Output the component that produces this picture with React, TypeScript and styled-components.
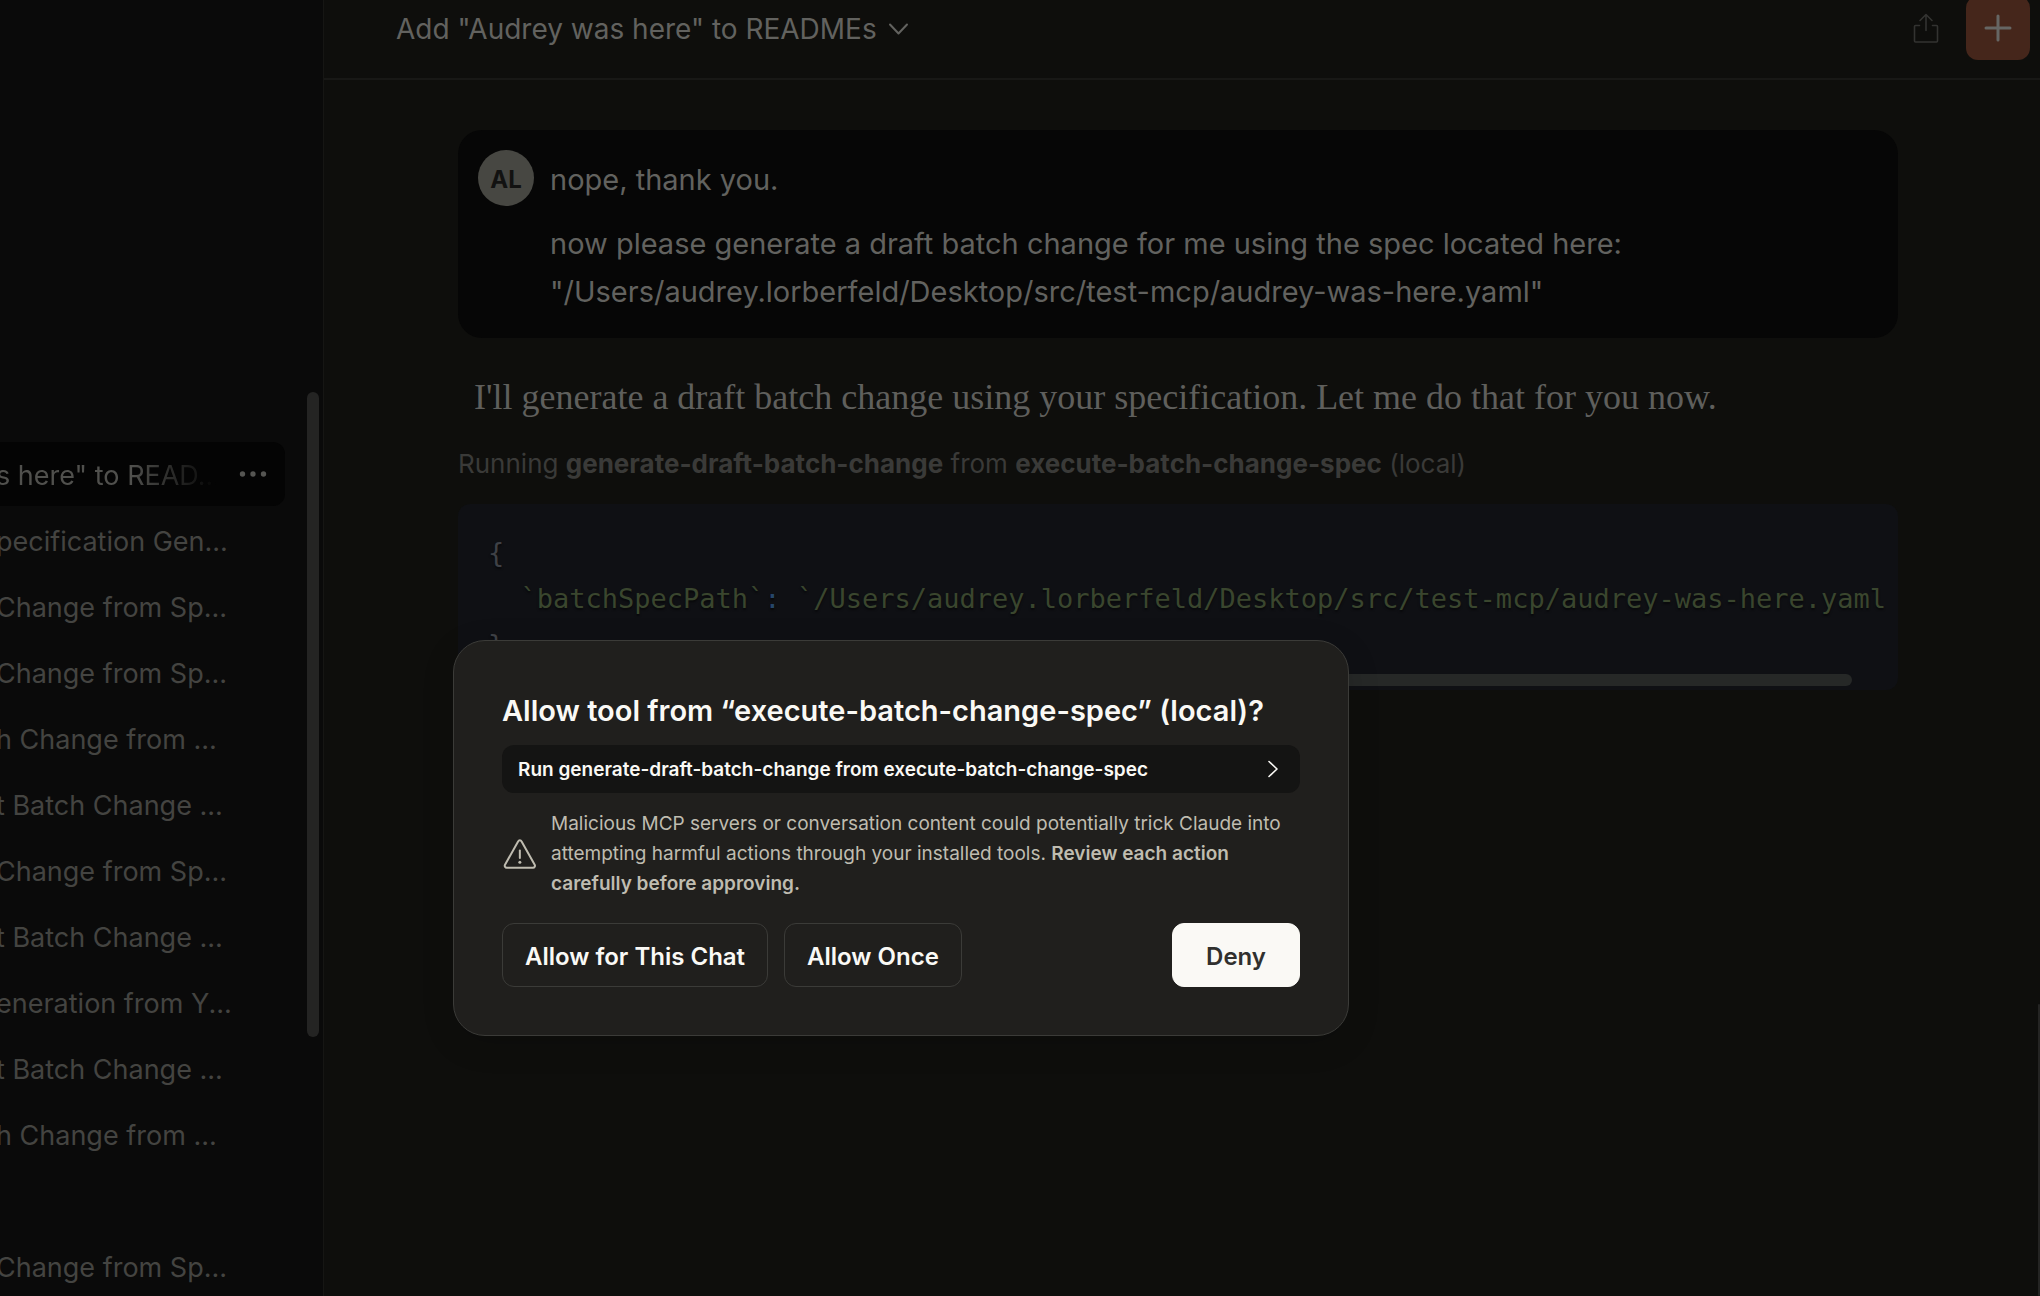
import React from "react";
import styled, { createGlobalStyle, css } from "styled-components";

const sans = `Inter, "Liberation Sans", sans-serif`;
const serif = `"Liberation Serif", serif`;
const mono = `"DejaVu Sans Mono", "Liberation Mono", monospace`;

const GlobalStyle = createGlobalStyle`
  *, *::before, *::after { box-sizing: border-box; }
  html, body, #root { height: 100%; }
  body {
    margin: 0;
    overflow: hidden;
    background: #0e0e0c;
    font-family: ${sans};
  }
  p, h1, h2, ul, pre { margin: 0; padding: 0; }
  button { font-family: inherit; cursor: pointer; }
`;

const Shell = styled.div`
  position: relative;
  display: grid;
  grid-template-columns: 324px minmax(0, 1fr);
  height: 100vh;
  overflow: hidden;
`;

/* Sidebar */

const Sidebar = styled.nav`
  display: flex;
  justify-content: space-between;
  min-height: 0;
  overflow: hidden;
  padding-right: 4px;
  background: #0a0a0a;
  border-right: 1px solid #161614;
`;

const ChatList = styled.ul`
  display: flex;
  flex-direction: column;
  gap: 2px;
  width: 285px;
  padding-top: 442px;
  list-style: none;
`;

const ChatItem = styled.li<{ $active?: boolean; $groupStart?: boolean }>`
  display: flex;
  flex: none;
  align-items: center;
  justify-content: space-between;
  height: 64px;
  padding-right: 16px;
  border-radius: 0 12px 12px 0;
  background: ${(p) => (p.$active ? "#040404" : "transparent")};
  ${(p) => p.$groupStart && css`margin-top: 66px;`}
`;

const ChatLink = styled.a<{ $active?: boolean }>`
  display: block;
  margin-left: -4px;
  padding-top: 4px;
  overflow: hidden;
  white-space: nowrap;
  font-size: 27px;
  line-height: 40px;
  text-decoration: none;
  color: ${(p) => (p.$active ? "#50504d" : "#444441")};
  ${(p) =>
    p.$active &&
    css`
      mask-image: linear-gradient(to right, #000 60%, transparent 98%);
    `}
`;

const MoreButton = styled.button`
  display: flex;
  padding: 0;
  border: 0;
  background: none;
  color: #555552;
`;

const ScrollRail = styled.div`
  display: flex;
  flex-direction: column;
  width: 12px;
`;

const RailSpace = styled.div<{ $grow: number }>`
  flex: ${(p) => p.$grow} 0 0;
`;

const RailThumb = styled(RailSpace)`
  border-radius: 6px;
  background: #242423;
`;

/* Main column */

const Main = styled.main`
  display: flex;
  flex-direction: column;
  min-width: 0;
  background: #0e0e0c;
`;

const Header = styled.header`
  display: flex;
  flex: none;
  align-items: center;
  justify-content: space-between;
  height: 80px;
  padding: 0 10px 22px 72px;
  border-bottom: 2px solid #181816;
`;

const TitleButton = styled.button`
  display: flex;
  align-items: center;
  gap: 8px;
  padding: 2px 0 0;
  border: 0;
  background: none;
  color: #62625f;
  font-size: 28px;
  line-height: 40px;
`;

const Actions = styled.div`
  display: flex;
  align-items: center;
  gap: 22px;
`;

const IconButton = styled.button`
  display: flex;
  padding: 0;
  border: 0;
  background: none;
  color: #333331;
`;

const NewButton = styled.button`
  display: flex;
  align-items: center;
  justify-content: center;
  width: 64px;
  height: 64px;
  padding: 0;
  border: 0;
  border-radius: 12px;
  background: #45261b;
  color: #666664;
`;

const Scroller = styled.div`
  display: flex;
  flex: 1;
  gap: 6px;
  min-height: 0;
`;

const Thread = styled.div`
  flex: 1;
  min-width: 0;
  max-width: 1440px;
  margin: 0 auto;
  padding-top: 50px;
`;

const PageRail = styled(ScrollRail)`
  width: 2px;
`;

const UserMessage = styled.section`
  display: flex;
  gap: 16px;
  padding: 20px 20px 22px;
  border-radius: 24px;
  background: #060606;
`;

const Avatar = styled.div`
  display: flex;
  flex: none;
  align-items: center;
  justify-content: center;
  width: 56px;
  height: 56px;
  padding-top: 2px;
  border-radius: 50%;
  background: #474742;
  color: #121211;
  font-size: 24px;
  font-weight: 700;
`;

const UserText = styled.div`
  display: flex;
  flex-direction: column;
  gap: 16px;
  padding-top: 6px;
  color: #62625f;
  font-size: 29px;
  line-height: 48px;
`;

const Reply = styled.p`
  padding: 34px 16px 0;
  color: #5f5f5c;
  font-family: ${serif};
  font-size: 36px;
  line-height: 50px;
`;

const Status = styled.p`
  margin-top: 22px;
  color: #3a3a38;
  font-size: 26px;
  line-height: 40px;
  b { font-weight: 700; }
`;

const CodeBlock = styled.section`
  display: flex;
  flex-direction: column;
  margin-top: 20px;
  padding: 26px 0 4px;
  border-radius: 12px;
  background: #0f1014;
  overflow: hidden;
`;

const Code = styled.pre`
  padding: 0 0 0 30px;
  overflow: hidden;
  color: #3f4146;
  font-family: ${mono};
  font-size: 27px;
  line-height: 46px;
  text-shadow: 0 2px 2px rgba(0, 0, 0, 0.5);
`;

const Str = styled.span`
  color: #3a462e;
`;

const Op = styled.span`
  color: #26466a;
`;

const CodeRail = styled.div`
  height: 12px;
  margin: 6px 46px 0 12px;
  border-radius: 6px;
  background: #262827;
`;

/* Permission dialog */

const Dialog = styled.div`
  position: absolute;
  top: 640px;
  left: 453px;
  display: flex;
  flex-direction: column;
  width: 896px;
  padding: 48px;
  border: 1px solid #3b3b38;
  border-radius: 32px;
  background: #201f1d;
  color: #faf9f5;
  box-shadow: 0 8px 32px rgba(0, 0, 0, 0.15);
`;

const DialogTitle = styled.h2`
  font-size: 29px;
  font-weight: 600;
  line-height: 44px;
`;

const RunRow = styled.button`
  display: flex;
  align-items: center;
  justify-content: space-between;
  height: 48px;
  margin-top: 12px;
  padding: 0 20px 0 16px;
  border: 0;
  border-radius: 12px;
  background: #141413;
  color: #faf9f5;
  font-size: 19px;
  font-weight: 600;
`;

const Warning = styled.div`
  display: flex;
  align-items: center;
  gap: 14px;
  margin-top: 16px;
  color: #bfbcb0;
  font-size: 19px;
  line-height: 30px;
  svg { flex: none; }
  b { font-weight: 600; }
`;

const Choices = styled.div`
  display: flex;
  gap: 16px;
  margin-top: 24px;
`;

const Choice = styled.button<{ $primary?: boolean }>`
  height: 64px;
  padding: 2px 22px 0;
  border: 1px solid #3b3b38;
  border-radius: 12px;
  background: transparent;
  color: #faf9f5;
  font-size: 24px;
  font-weight: 600;
  ${(p) =>
    p.$primary &&
    css`
      margin-left: auto;
      padding: 2px 33px 0;
      border-color: #faf9f5;
      background: #faf9f5;
      color: #30302e;
    `}
`;

const chats = [
  { title: `s here" to READ...`, active: true },
  { title: "pecification Gen..." },
  { title: "Change from Sp..." },
  { title: "Change from Sp..." },
  { title: "h Change from ..." },
  { title: "t Batch Change ..." },
  { title: "Change from Sp..." },
  { title: "t Batch Change ..." },
  { title: "eneration from Y..." },
  { title: "t Batch Change ..." },
  { title: "h Change from ..." },
  { title: "Change from Sp...", groupStart: true },
];

export default function App() {
  return (
    <>
      <GlobalStyle />
      <Shell>
        <Sidebar aria-label="Chats">
          <ChatList>
            {chats.map((chat, i) => (
              <ChatItem key={i} $active={chat.active} $groupStart={chat.groupStart}>
                <ChatLink href="#" $active={chat.active}>
                  {chat.title}
                </ChatLink>
                {chat.active && (
                  <MoreButton aria-label="Chat options">
                    <svg width="32" height="32" viewBox="0 0 32 32" fill="currentColor">
                      <circle cx="5.5" cy="16" r="2.7" />
                      <circle cx="16" cy="16" r="2.7" />
                      <circle cx="26.5" cy="16" r="2.7" />
                    </svg>
                  </MoreButton>
                )}
              </ChatItem>
            ))}
          </ChatList>
          <ScrollRail>
            <RailSpace $grow={392} />
            <RailThumb $grow={645} />
            <RailSpace $grow={259} />
          </ScrollRail>
        </Sidebar>

        <Main>
          <Header>
            <TitleButton>
              Add "Audrey was here" to READMEs
              <svg width="26" height="26" viewBox="0 0 26 26" fill="none" stroke="currentColor" strokeWidth="2" strokeLinecap="round" strokeLinejoin="round">
                <path d="M5 8.500l8.500 9 8.500-9" />
              </svg>
            </TitleButton>
            <Actions>
              <IconButton aria-label="Share">
                <svg width="36" height="36" viewBox="0 0 36 36" fill="none" stroke="currentColor" strokeWidth="1.6" strokeLinecap="round" strokeLinejoin="round">
                  <path d="M18 20.500V4.500M12 10.500l6-6 6 6" />
                  <path d="M11.500 15.500H7.500a1 1 0 0 0-1 1v14.500a1 1 0 0 0 1 1h21a1 1 0 0 0 1-1V16.500a1 1 0 0 0-1-1h-4" />
                </svg>
              </IconButton>
              <NewButton aria-label="New chat">
                <svg width="32" height="32" viewBox="0 0 32 32" fill="none" stroke="currentColor" strokeWidth="3" strokeLinecap="round">
                  <path d="M16 4v24M4 16h24" />
                </svg>
              </NewButton>
            </Actions>
          </Header>

          <Scroller>
            <Thread>
              <UserMessage>
                <Avatar>AL</Avatar>
                <UserText>
                  <p>nope, thank you.</p>
                  <p>
                    now please generate a draft batch change for me using the spec located here:
                    <br />
                    "/Users/audrey.lorberfeld/Desktop/src/test-mcp/audrey-was-here.yaml"
                  </p>
                </UserText>
              </UserMessage>
              <Reply>
                I'll generate a draft batch change using your specification. Let me do that for you now.
              </Reply>
              <Status>
                Running <b>generate-draft-batch-change</b> from <b>execute-batch-change-spec</b> (local)
              </Status>
              <CodeBlock>
                <Code>
                  {"{\n  "}
                  <Str>`batchSpecPath`</Str>
                  <Op>:</Op>{" "}
                  <Str>`/Users/audrey.lorberfeld/Desktop/src/test-mcp/audrey-was-here.yaml</Str>
                  {"\n}"}
                </Code>
                <CodeRail />
              </CodeBlock>
            </Thread>
            <PageRail>
              <RailSpace $grow={924} />
              <RailThumb $grow={292} />
            </PageRail>
          </Scroller>
        </Main>

        <Dialog role="dialog" aria-labelledby="dialog-title">
          <DialogTitle id="dialog-title">Allow tool from “execute-batch-change-spec” (local)?</DialogTitle>
          <RunRow>
            Run generate-draft-batch-change from execute-batch-change-spec
            <svg width="16" height="20" viewBox="0 0 16 20" fill="none" stroke="currentColor" strokeWidth="1.6" strokeLinecap="round" strokeLinejoin="round">
              <path d="M5 2.500l8 7.500-8 7.500" />
            </svg>
          </RunRow>
          <Warning>
            <svg width="35" height="35" viewBox="0 0 35 35" fill="none" stroke="currentColor" strokeWidth="2" strokeLinecap="round" strokeLinejoin="round">
              <path d="M16.100 4.400L3 27.800a2 2 0 0 0 1.700 3h26.300a2 2 0 0 0 1.700-3L19.600 4.400a2 2 0 0 0-3.500 0z" />
              <path d="M17.850 13.500v7.500" />
              <circle cx="17.850" cy="25.300" r="1.500" fill="currentColor" stroke="none" />
            </svg>
            <p>
              Malicious MCP servers or conversation content could potentially trick Claude into
              attempting harmful actions through your installed tools.{" "}
              <b>Review each action carefully before approving.</b>
            </p>
          </Warning>
          <Choices>
            <Choice>Allow for This Chat</Choice>
            <Choice>Allow Once</Choice>
            <Choice $primary>Deny</Choice>
          </Choices>
        </Dialog>
      </Shell>
    </>
  );
}
